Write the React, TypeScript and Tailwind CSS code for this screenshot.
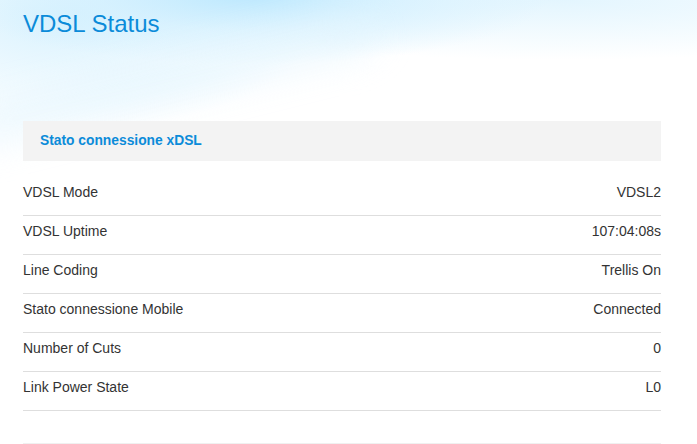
const rows: [string, string][] = [
  ["VDSL Mode", "VDSL2"],
  ["VDSL Uptime", "107:04:08s"],
  ["Line Coding", "Trellis On"],
  ["Stato connessione Mobile", "Connected"],
  ["Number of Cuts", "0"],
  ["Link Power State", "L0"],
];

export default function App() {
  return (
    <div className="relative min-h-[444px] w-full overflow-hidden bg-white font-['Liberation_Sans',Arial,sans-serif]">
      {/* sky swoosh background */}
      <div className="pointer-events-none absolute inset-0 bg-[radial-gradient(ellipse_300px_70px_at_250px_-5px,#bce8fe_0%,rgba(205,238,254,0.6)_50%,rgba(255,255,255,0)_100%),radial-gradient(ellipse_420px_60px_at_560px_0px,rgba(220,243,254,0.8)_0%,rgba(255,255,255,0)_100%),radial-gradient(ellipse_260px_110px_at_60px_20px,rgba(214,241,254,0.9)_0%,rgba(255,255,255,0)_100%)]" />
      <div className="pointer-events-none absolute left-[-40px] top-[60px] h-[40px] w-[420px] -rotate-[14deg] rounded-full bg-[#e3f5fe] opacity-60 blur-[18px]" />

      <div className="relative px-[23px] pt-[10px]">
        <h1 className="text-[24px] leading-[28px] font-normal text-[#0b8bd9]">VDSL Status</h1>

        <div className="mt-[83px] mr-[13px] flex h-[40px] items-center bg-[#f3f3f3] px-[17px]">
          <span className="text-[13.8px] font-bold text-[#0b8bd9]">Stato connessione xDSL</span>
        </div>

        <div className="mt-[16px] mr-[13px]">
          {rows.map(([k, v]) => (
            <div
              key={k}
              className="flex h-[39px] justify-between border-b border-[#dedede] pt-[5px] text-[14px] leading-[20px] text-[#333333]"
            >
              <span>{k}</span>
              <span>{v}</span>
            </div>
          ))}
        </div>

        <div className="mt-[32px] mr-[13px] border-t border-[#f0f0f0]" />
      </div>
    </div>
  );
}
